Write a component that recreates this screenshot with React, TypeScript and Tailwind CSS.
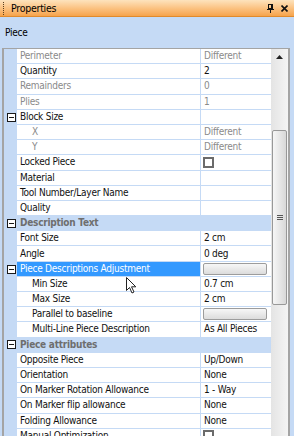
import React from "react";

type Row =
  | { kind: "prop"; name: string; value?: string; disabled?: boolean; indent?: boolean; expander?: boolean; checkbox?: boolean; button?: boolean; selected?: boolean }
  | { kind: "cat"; name: string };

const rows: Row[] = [
  { kind: "prop", name: "Perimeter", value: "Different", disabled: true },
  { kind: "prop", name: "Quantity", value: "2" },
  { kind: "prop", name: "Remainders", value: "0", disabled: true },
  { kind: "prop", name: "Plies", value: "1", disabled: true },
  { kind: "prop", name: "Block Size", expander: true },
  { kind: "prop", name: "X", value: "Different", disabled: true, indent: true },
  { kind: "prop", name: "Y", value: "Different", disabled: true, indent: true },
  { kind: "prop", name: "Locked Piece", checkbox: true },
  { kind: "prop", name: "Material" },
  { kind: "prop", name: "Tool Number/Layer Name" },
  { kind: "prop", name: "Quality" },
  { kind: "cat", name: "Description Text" },
  { kind: "prop", name: "Font Size", value: "2 cm" },
  { kind: "prop", name: "Angle", value: "0 deg" },
  { kind: "prop", name: "Piece Descriptions Adjustment", expander: true, button: true, selected: true },
  { kind: "prop", name: "Min Size", value: "0.7 cm", indent: true },
  { kind: "prop", name: "Max Size", value: "2 cm", indent: true },
  { kind: "prop", name: "Parallel to baseline", button: true, indent: true },
  { kind: "prop", name: "Multi-Line Piece Description", value: "As All Pieces", indent: true },
  { kind: "cat", name: "Piece attributes" },
  { kind: "prop", name: "Opposite Piece", value: "Up/Down" },
  { kind: "prop", name: "Orientation", value: "None" },
  { kind: "prop", name: "On Marker Rotation Allowance", value: "1 - Way" },
  { kind: "prop", name: "On Marker flip allowance", value: "None" },
  { kind: "prop", name: "Folding Allowance", value: "None" },
  { kind: "prop", name: "Manual Optimization", checkbox: true },
];

function Expander() {
  return (
    <div className="w-[9px] h-[9px] border border-[#1a1a1a] bg-white flex items-center justify-center">
      <div className="w-[5px] h-[1px] bg-[#1a1a1a]" />
    </div>
  );
}

function GridRow({ r }: { r: Row }) {
  if (r.kind === "cat") {
    return (
      <div className="h-[15.2px] flex items-center bg-[#c5daf5] border-b border-[#c5daf5] shrink-0">
        <div className="w-[13px] flex justify-center pl-[1px]">
          <Expander />
        </div>
        <div className="pl-[3px] font-bold text-[#6e6e6e] whitespace-nowrap">{r.name}</div>
      </div>
    );
  }
  return (
    <div className="h-[15.2px] flex shrink-0">
      <div className="w-[13px] bg-[#c5daf5] flex items-center justify-center pl-[1px]">
        {r.expander && <Expander />}
      </div>
      <div
        className={
          "w-[184px] border-b border-r border-[#c5daf5] flex items-center overflow-hidden whitespace-nowrap " +
          (r.indent ? "pl-[15px] " : "pl-[3px] ") +
          (r.selected ? "bg-[#3399ff] text-white" : r.disabled ? "bg-white text-[#8a8a8a]" : "bg-white text-[#111]")
        }
      >
        {r.name}
      </div>
      <div
        className={
          "flex-1 border-b border-[#c5daf5] bg-white flex items-center pl-[3px] overflow-hidden whitespace-nowrap " +
          (r.disabled ? "text-[#8a8a8a]" : "text-[#111]")
        }
      >
        {r.value}
        {r.checkbox && <div className="w-[11px] h-[11px] border-2 border-[#6b6b6b] bg-white ml-[-1px]" />}
        {r.button && (
          <div className="w-[64px] h-[12px] ml-[-1px] rounded-[2px] border border-[#9c9c9c] bg-gradient-to-b from-[#f7f7f7] to-[#dcdcdc]" />
        )}
      </div>
    </div>
  );
}

export default function App() {
  return (
    <div
      className="w-[294px] h-[436px] overflow-hidden relative bg-[#c5daf5] flex flex-col text-[10px] tracking-[-0.25px] leading-none"
      style={{ fontFamily: '"DejaVu Sans Condensed", "DejaVu Sans", sans-serif', fontStretch: "condensed" }}
    >
      {/* Title bar */}
      <div className="h-[17px] shrink-0 flex items-center bg-gradient-to-b from-[#fde3bd] via-[#fbc383] to-[#f6a34a] border-b border-[#e08a2c]">
        <div className="ml-[3px] w-[2px] h-[13px] flex flex-col justify-between">
          {[0, 1, 2, 3, 4, 5, 6].map((i) => (
            <div key={i} className="w-[1px] h-[1px] bg-[#5a4020]" />
          ))}
        </div>
        <div className="ml-[6px] text-[10.5px] text-black">Properties</div>
        <div className="flex-1" />
        <svg width="7" height="9" viewBox="0 0 7 9" className="mr-[7px]">
          <rect x="1.5" y="0.5" width="4" height="4" fill="none" stroke="#111" />
          <rect x="4" y="1" width="1" height="4" fill="#111" />
          <rect x="0" y="5" width="7" height="1" fill="#111" />
          <rect x="3" y="6" width="1" height="3" fill="#111" />
        </svg>
        <svg width="7" height="7" viewBox="0 0 7 7" className="mr-[6px]">
          <path d="M0.5 0.5 L6.5 6.5 M6.5 0.5 L0.5 6.5" stroke="#111" strokeWidth="1.6" />
        </svg>
      </div>

      {/* Header */}
      <div className="h-[31px] shrink-0 flex items-center pl-[5px] text-black">Piece</div>

      {/* Grid */}
      <div className="flex-1 flex ml-[2px] mr-[4px] border-l-2 border-r-2 border-t border-[#a4a4a4] bg-white overflow-hidden">
        <div className="flex-1 flex flex-col overflow-hidden">
          {rows.map((r, i) => (
            <GridRow key={i} r={r} />
          ))}
        </div>
        {/* Scrollbar */}
        <div className="w-[17px] shrink-0 bg-gradient-to-r from-[#e4e4e4] to-[#f4f4f4] flex flex-col items-center">
          <div className="h-[15px] w-full flex items-center justify-center">
            <svg width="7" height="4" viewBox="0 0 7 4">
              <path d="M0 4 L3.5 0 L7 4 Z" fill="#222" />
            </svg>
          </div>
          <div className="h-[66px]" />
          <div className="w-[15px] h-[175px] rounded-[2px] border border-[#989898] bg-gradient-to-r from-[#f6f6f6] to-[#d8d8d8] flex flex-col items-center justify-center gap-[1px]">
            <div className="w-[6px] h-[1px] bg-[#555]" />
            <div className="w-[6px] h-[1px] bg-[#555]" />
            <div className="w-[6px] h-[1px] bg-[#555]" />
          </div>
        </div>
      </div>

      {/* Mouse cursor */}
      <svg className="absolute left-[126px] top-[277px]" width="12" height="18" viewBox="0 0 12 18">
        <path d="M0.5 0.5 L0.5 13.5 L3.5 10.5 L6 16 L8 15 L5.5 9.8 L9.8 9.8 Z" fill="#fff" stroke="#222" strokeWidth="1" strokeLinejoin="round" />
      </svg>
    </div>
  );
}
